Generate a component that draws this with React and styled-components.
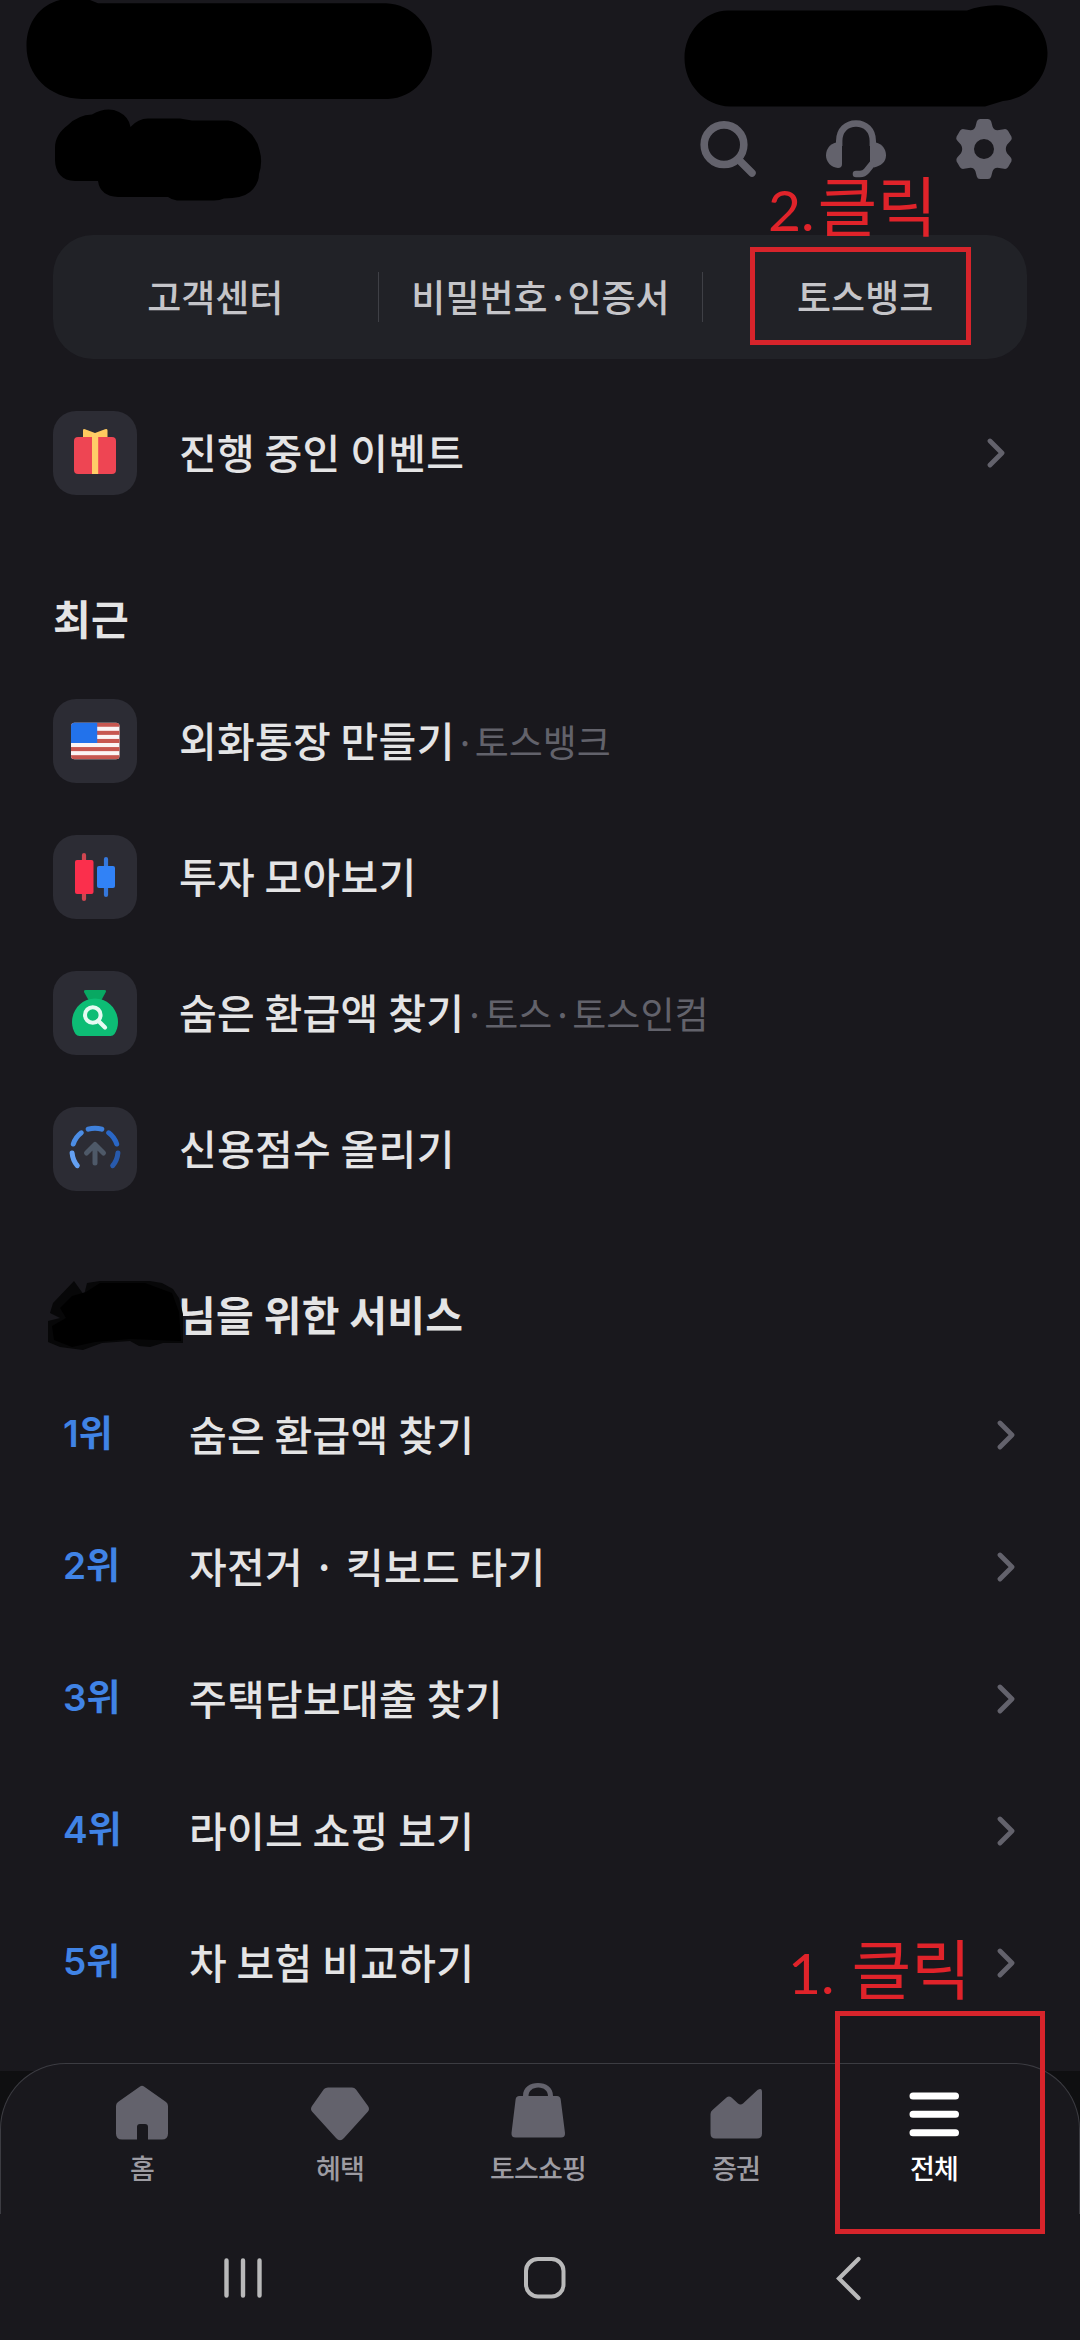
import styled, { createGlobalStyle } from "styled-components"

const GlobalStyle = createGlobalStyle`
    * {
        box-sizing: border-box;
    }
    body {
        margin: 0;
        background: #19181d;
        font-family: "Noto Sans CJK KR", sans-serif;
    }
`
const Screen = styled.div`
    position: relative;
    display: flex;
    flex-direction: column;
    width: 1080px;
    height: 2340px;
    overflow: hidden;
    background: #19181d;
    color: #e4e4e5;
`
const TopBar = styled.header`
    display: flex;
    justify-content: flex-end;
    align-items: flex-end;
    gap: 66px;
    height: 179px;
    padding-right: 64px;
    flex: none;
`
const Shortcuts = styled.nav`
    display: grid;
    grid-template-columns: repeat(3, 1fr);
    align-items: center;
    height: 124px;
    margin: 56px 53px 0;
    border-radius: 40px;
    background: #212227;
    flex: none;
`
const Shortcut = styled.a`
    display: flex;
    justify-content: center;
    align-items: center;
    height: 50px;
    padding-bottom: 2px;
    color: #c5c5c9;
    font-size: 37px;
    font-weight: 500;
    white-space: nowrap;
    & + & {
        border-left: 1px solid #3f4046;
    }
`
const Dot = styled.span`
    width: 20px;
    display: inline-block;
    text-align: center;
`
const ServiceList = styled.section`
    display: flex;
    flex-direction: column;
    gap: 52px;
    margin-top: ${(props) => props.$top}px;
    padding: 0 75px 0 53px;
    flex: none;
`
const ServiceRow = styled.div`
    display: flex;
    align-items: center;
    height: 84px;
`
const IconTile = styled.div`
    width: 84px;
    height: 84px;
    margin-right: 42px;
    border-radius: 23px;
    background: #2c2c34;
    svg {
        display: block;
    }
`
const Label = styled.span`
    padding-bottom: 4px;
    font-size: 41px;
    font-weight: 500;
    letter-spacing: 0.3px;
    line-height: 60px;
    white-space: pre;
`
const SubLabel = styled.span`
    color: #62626b;
    font-size: 37px;
    line-height: 60px;
    white-space: nowrap;
`
const SectionTitle = styled.h2`
    height: 60px;
    margin: ${(props) => props.$top}px 0 0 ${(props) => props.$left || 53}px;
    font-size: 41px;
    font-weight: 700;
    letter-spacing: 0.3px;
    line-height: 60px;
    flex: none;
`
const RankList = styled.ol`
    list-style: none;
    margin: 26px 0 0;
    padding: 0 65px 0 63px;
    flex: none;
`
const RankRow = styled.li`
    display: grid;
    grid-template-columns: 126px 1fr 18px;
    align-items: center;
    height: 132px;
`
const Rank = styled.span`
    padding-bottom: 2px;
    color: #4083e5;
    font-family: Inter, "Noto Sans CJK KR", sans-serif;
    font-size: 37px;
    font-weight: 600;
    line-height: 60px;
`
const Chevron = styled.svg`
    display: block;
    width: 18px;
    height: 30px;
    margin-left: auto;
`
const TabBackdrop = styled.div`
    position: absolute;
    left: 0;
    top: 2071px;
    width: 1080px;
    height: 142px;
    background: #0f0f11;
`
const TabBar = styled.nav`
    position: absolute;
    left: 0;
    top: 2063px;
    display: grid;
    grid-template-columns: repeat(5, 198px);
    width: 1080px;
    height: 151px;
    padding-left: 42px;
    border: 1px solid #3c3c42;
    border-bottom: 0;
    border-radius: 66px 66px 0 0;
    background: #19181d;
`
const Tab = styled.a`
    display: flex;
    flex-direction: column;
    align-items: center;
    padding-top: 19px;
    color: ${(props) => (props.$active ? "#ffffff" : "#9d9ca3")};
    font-size: 27px;
    font-weight: 500;
    letter-spacing: -0.9px;
    line-height: 40px;
    svg {
        margin-bottom: 5px;
    }
`
const SystemBar = styled.div`
    position: absolute;
    left: 0;
    top: 2214px;
    display: flex;
    align-items: center;
    width: 1080px;
    height: 126px;
    padding: 2px 0 0 221px;
    gap: 257px;
    background: #19181d;
`
const Scribbles = styled.svg`
    position: absolute;
    left: 0;
    top: 0;
`
const Marker = styled.div`
    position: absolute;
    left: ${(props) => props.$x}px;
    top: ${(props) => props.$y}px;
    width: ${(props) => props.$w}px;
    height: ${(props) => props.$h}px;
    border: 5px solid #d7242b;
`
const Note = styled.div`
    position: absolute;
    left: ${(props) => props.$x}px;
    top: ${(props) => props.$y}px;
    display: flex;
    align-items: baseline;
    gap: ${(props) => props.$gap}px;
    color: #e0232a;
    font-size: 65px;
    line-height: 90px;
    white-space: nowrap;
`
const NoteNumber = styled.span`
    font-family: Lato, "Noto Sans", sans-serif;
    font-size: 57px;
`

const grey = "#63626c"

const SearchIcon = () => (
    <svg width="60" height="60" viewBox="0 0 60 60" fill="none" stroke={grey}>
        <circle cx="24" cy="25.700" r="19.800" strokeWidth="7.600" />
        <path d="M39 41 L52 54" strokeWidth="7.500" strokeLinecap="round" />
    </svg>
)

const HeadsetIcon = () => (
    <svg width="60" height="60" viewBox="0 -1 60 60" fill="none" stroke={grey}>
        <path d="M13.200 26 V21 C13.200 10 20.500 3.500 30 3.500 S46.800 10 46.800 21 V26" strokeWidth="6.400" />
        <path d="M10 22.500 H16 V44 Q16 48 12 48 C5 47.500 0 42 0 35.300 C0 29 4 24 10 22.500 Z" fill={grey} stroke="none" />
        <path d="M50 22.500 H44 V43 L48 47.500 C55 46 60 42 60 35.300 C60 29 56 24 50 22.500 Z" fill={grey} stroke="none" />
        <path d="M46.500 43.500 L40.500 51 Q38 54 34 54 H30" strokeWidth="6.600" strokeLinecap="round" />
    </svg>
)

const GearIcon = () => (
    <svg width="64" height="60" viewBox="0 0 64 60">
        <path
            fill={grey}
            fillRule="evenodd"
            d="M28 0 H36 Q38.500 0 39.200 2.500 L40.500 7.500 Q41.500 11 45.500 11.300 L52 10.200 Q54.500 9.600 56 11.800 L59.500 17.800 Q60.400 19.800 58.600 21.800 L55 25.700 Q52.600 30 55 34.300 L58.600 38.200 Q60.400 40.200 59.500 42.200 L56 48.200 Q54.500 50.400 52 49.800 L45.500 48.700 Q41.500 49 40.500 52.500 L39.200 57.500 Q38.500 60 36 60 H28 Q25.500 60 24.800 57.500 L23.500 52.500 Q22.500 49 18.500 48.700 L12 49.800 Q9.500 50.400 8 48.200 L4.500 42.200 Q3.600 40.200 5.400 38.200 L9 34.300 Q11.400 30 9 25.700 L5.400 21.800 Q3.600 19.800 4.500 17.800 L8 11.800 Q9.500 9.600 12 10.200 L18.500 11.300 Q22.500 11 23.500 7.500 L24.800 2.500 Q25.500 0 28 0 Z M32 20 A10 10 0 1 0 32 40 A10 10 0 1 0 32 20 Z"
        />
    </svg>
)

const GiftIcon = () => (
    <svg width="84" height="84" viewBox="0 0 84 84">
        <path d="M30 28 V19.500 Q30 17.500 32 18.200 L42 22 L52 18.200 Q54.500 17.500 54.500 19.500 V28 Z" fill="#ffc95f" />
        <rect x="21" y="26" width="42" height="37" rx="4" fill="#ee4553" />
        <rect x="39" y="22" width="6.200" height="41" fill="#ffcd68" />
    </svg>
)

const FlagIcon = () => (
    <svg width="84" height="84" viewBox="0 0 84 84">
        <defs>
            <clipPath id="flag">
                <rect x="18" y="23.700" width="48.500" height="36.500" rx="3.500" />
            </clipPath>
        </defs>
        <g clipPath="url(#flag)">
            <rect x="18" y="23" width="49" height="38" fill="#fbf4f4" />
            {[0, 2, 4, 6, 8].map((n) => (
                <rect key={n} x="18" y={23.7 + n * 4.06} width="49" height="4.06" fill="#c75750" />
            ))}
            <rect x="18" y="23" width="26.200" height="21" fill="#2272eb" />
        </g>
    </svg>
)

const CandleIcon = () => (
    <svg width="84" height="84" viewBox="0 0 84 84" strokeWidth="4.200" strokeLinecap="round">
        <path d="M31 20 V64" stroke="#cf4650" />
        <rect x="22" y="25" width="18.500" height="34" rx="2" fill="#fb2f4c" />
        <path d="M53 24 V60" stroke="#3578dc" />
        <rect x="44" y="31" width="18" height="22" rx="2" fill="#3182f6" />
    </svg>
)

const RefundIcon = () => (
    <svg width="84" height="84" viewBox="0 0 84 84">
        <path d="M32.500 19 H51.500 Q53.600 19 52.800 21 L48.500 29 H35.500 L31 21 Q30.400 19 32.500 19 Z" fill="#08a862" />
        <path d="M42 27.500 C55 27.500 65 38.500 65 51 C65 56 63.500 60 61.500 63 Q60 65 57.500 65 H26.500 Q24 65 22.500 63 C20.500 60 19 56 19 51 C19 38.500 29 27.500 42 27.500 Z" fill="#0dbd75" />
        <circle cx="39.800" cy="44" r="7.800" fill="none" stroke="#e6faf2" strokeWidth="4" />
        <path d="M45.500 50 L52 56.500" stroke="#e6faf2" strokeWidth="4.200" strokeLinecap="round" />
    </svg>
)

const ScoreIcon = () => (
    <svg width="84" height="84" viewBox="0 0 84 84" fill="none" strokeWidth="5" strokeLinecap="round" strokeLinejoin="round">
        <path d="M24.300 58.700 A23 23 0 0 1 19.100 46" stroke="#64a0f2" />
        <path d="M20.300 37 A23 23 0 0 1 28.300 25.800" stroke="#4c8de4" />
        <path d="M35.200 22.200 A23 23 0 0 1 48.800 22.200" stroke="#3f81dc" />
        <path d="M55.700 25.800 A23 23 0 0 1 63.700 37" stroke="#2a67c6" />
        <path d="M64.900 46 A23 23 0 0 1 59.700 58.700" stroke="#285aac" />
        <path d="M42 56 V37.500 M33.500 46 L42 37.500 L50.500 46" stroke="#4e5968" />
    </svg>
)

const ChevronRight = () => (
    <Chevron viewBox="0 0 18 30" fill="none" stroke={grey} strokeWidth="4.800" strokeLinecap="round" strokeLinejoin="round">
        <path d="M3 3 L15 15 L3 27" />
    </Chevron>
)

const tabIcons = {
    home: <path d="M28 3.500 Q30 2 32 3.500 L54 19 Q56 20.500 56 23 V50.500 Q56 56.500 50 56.500 H36 V44 Q36 41 33 41 H28 Q25 41 25 44 V56.500 H10 Q4 56.500 4 50.500 V23 Q4 20.500 6 19 Z" />,
    gem: <path d="M14 6 Q15.500 4.500 18 4.500 H42 Q44.500 4.500 46 6.500 L58 23 Q60 26 58 28.500 L34 55 Q30 59.500 26 55 L2 28.500 Q0 26 2 23 Z" />,
    bag: <path fillRule="evenodd" d="M15 13 C15 4 22 0 30 0 S45 4 45 13 H49 Q52.300 13 52.700 16.500 L57 50 Q57.300 54.500 53 54.500 H7.500 Q3.200 54.500 3.500 50 L7.600 16.500 Q8 13 11.300 13 Z M20.500 13 H40 C40 8 36 4.500 30.300 4.500 S20.500 8 20.500 13 Z" />,
    chart: <path d="M4.500 31 Q4.500 28.500 6.500 27 L20.500 14.500 Q23 12.500 25.500 14.500 L32 20.500 Q34.500 22.500 37 20.500 L51.500 7 Q56 4 56 9 V50.500 Q56 55.500 51 55.500 H9.500 Q4.500 55.500 4.500 50.500 Z" />,
    menu: <path d="M9 13 H51.500 M9 31.300 H51.500 M9 49.700 H51.500" stroke="#ffffff" strokeWidth="7" strokeLinecap="round" />,
}

const tabs = [
    { icon: "home", name: "홈" },
    { icon: "gem", name: "혜택" },
    { icon: "bag", name: "토스쇼핑" },
    { icon: "chart", name: "증권" },
    { icon: "menu", name: "전체", active: true },
]

const recents = [
    { icon: <FlagIcon />, name: "외화통장 만들기", by: ["토스뱅크"] },
    { icon: <CandleIcon />, name: "투자 모아보기", by: [] },
    { icon: <RefundIcon />, name: "숨은 환급액 찾기", by: ["토스", "토스인컴"] },
    { icon: <ScoreIcon />, name: "신용점수 올리기", by: [] },
]

const ranking = ["숨은 환급액 찾기", "자전거 · 킥보드 타기", "주택담보대출 찾기", "라이브 쇼핑 보기", "차 보험 비교하기"]

export default function App() {
    return (
        <Screen>
            <GlobalStyle />
            <TopBar>
                <SearchIcon />
                <HeadsetIcon />
                <GearIcon />
            </TopBar>
            <Shortcuts>
                <Shortcut>고객센터</Shortcut>
                <Shortcut>비밀번호<Dot>·</Dot>인증서</Shortcut>
                <Shortcut>토스뱅크</Shortcut>
            </Shortcuts>
            <ServiceList $top={52}>
                <ServiceRow>
                    <IconTile><GiftIcon /></IconTile>
                    <Label>진행 중인 이벤트</Label>
                    <ChevronRight />
                </ServiceRow>
            </ServiceList>
            <SectionTitle $top={92}>최근</SectionTitle>
            <ServiceList $top={52}>
                {recents.map((item) => (
                    <ServiceRow key={item.name}>
                        <IconTile>{item.icon}</IconTile>
                        <Label>{item.name}</Label>
                        <SubLabel>
                            {item.by.map((company) => (
                                <span key={company}><Dot>·</Dot>{company}</span>
                            ))}
                        </SubLabel>
                    </ServiceRow>
                ))}
            </ServiceList>
            <SectionTitle $top={92} $left={178}>님을 위한 서비스</SectionTitle>
            <RankList>
                {ranking.map((name, i) => (
                    <RankRow key={name}>
                        <Rank>{i + 1}위</Rank>
                        <Label>{name}</Label>
                        <ChevronRight />
                    </RankRow>
                ))}
            </RankList>
            <TabBackdrop />
            <TabBar>
                {tabs.map((tab) => (
                    <Tab key={tab.icon} $active={tab.active}>
                        <svg width="60" height="60" viewBox="0 0 60 60" fill={grey}>{tabIcons[tab.icon]}</svg>
                        {tab.name}
                    </Tab>
                ))}
            </TabBar>
            <SystemBar>
                <svg width="44" height="44" viewBox="0 0 44 44" stroke="#b9b9ba" strokeWidth="4.400" strokeLinecap="round">
                    <path d="M5.500 4.500 V39.500 M22 4.500 V39.500 M38.500 4.500 V39.500" />
                </svg>
                <svg width="46" height="46" viewBox="0 0 46 46" fill="none" stroke="#b9b9ba" strokeWidth="4">
                    <rect x="4" y="4" width="37.500" height="37.500" rx="12" />
                </svg>
                <svg width="46" height="46" viewBox="0 0 46 46" fill="none" stroke="#b9b9ba" strokeWidth="4.200" strokeLinecap="round">
                    <path d="M33.500 4 L14 23.500 L33.500 43" />
                </svg>
            </SystemBar>
            {/* blacked-out private details */}
            <Scribbles width="1080" height="1360" viewBox="0 0 1080 1360">
                <path d="M60 0 H90 L98 3.300 H386 C412 4 432 26 432 51 C432 76 414 98 388 99 H82 C48 98 26.500 75 26.500 46 C26.500 22 40 5 60 0 Z" />
                <path d="M728 10.500 H967 Q980 5.500 996 5.300 C1026 5.300 1047.500 28 1047.500 53 C1047.500 78 1028 99 1003 101 L985 106.500 H730 C704 106 684.500 84 684.500 58 C684.500 32 704 11 728 10.500 Z" />
                <path d="M55 148 C55 138 60 131 68 125 Q78 115 92 114.500 Q107 106 119 112 Q129 117 130.500 127 Q138 118.500 148 118.500 H180 L192 120.500 H228 Q236 121 246 129 Q257 138 259.500 150 Q263 162 259 174 Q259 184 250 192 Q242 198.500 224 198.500 Q220 200.500 214 200.500 H177 Q172 200 168 197 H118 Q100 196 98 181 H75 C62 181 55 172 55 160 Z" />
                <path fill="#070708" d="M74 1281 L84 1295 L87 1283 L100 1281 H150 L162 1283 L173 1289 L179 1298 L183 1314 V1343 L163 1343 L150 1347 L139 1346 L130 1341 L102 1343 L83 1350 L60 1347 L48 1342 L48 1321 L60 1318 L50 1313 L53 1303 Z" />
                <path d="M86 1292 L100 1283 H145 L172 1293 L179 1312 L181 1341 L130 1339 L95 1342 L72 1347 L54 1340 L52 1326 L66 1318 L60 1308 L72 1296 Z" />
            </Scribbles>
            <Marker $x={750} $y={247} $w={221} $h={98} />
            <Note $x={768} $y={158} $gap={3}>
                <NoteNumber>2.</NoteNumber>클릭
            </Note>
            <Marker $x={835} $y={2011} $w={210} $h={223} />
            <Note $x={788} $y={1921} $gap={17}>
                <NoteNumber>1.</NoteNumber>클릭
            </Note>
        </Screen>
    )
}
